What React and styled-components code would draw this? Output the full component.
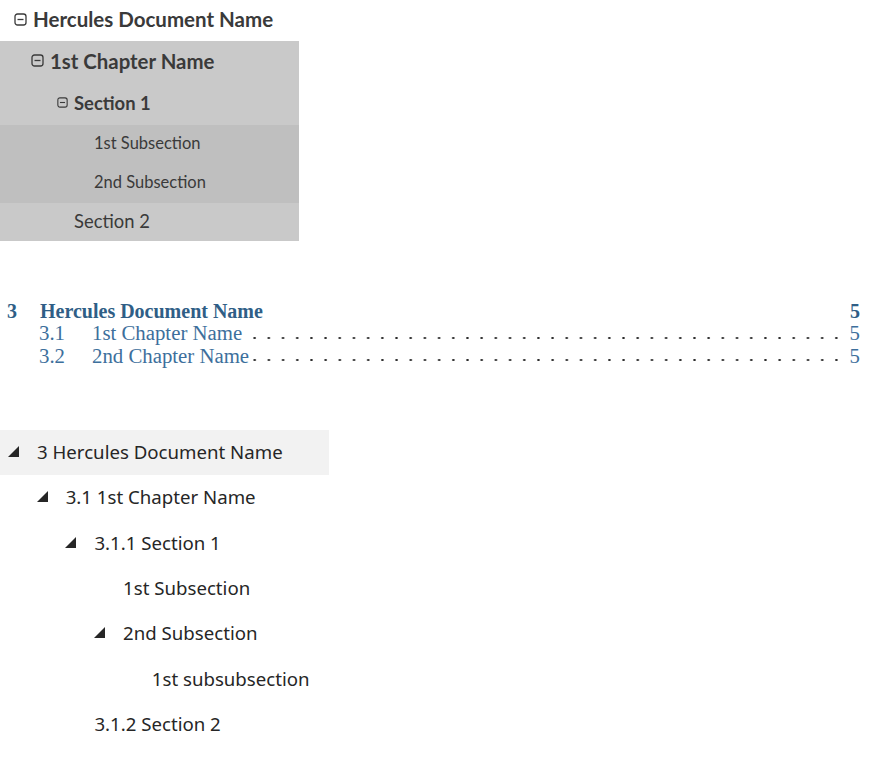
import React from "react";
import styled, { createGlobalStyle } from "styled-components";

const Global = createGlobalStyle`
  html, body { margin: 0; padding: 0; background: #ffffff; }
  body { font-family: "Lato", "Noto Sans", sans-serif; }
`;

const Page = styled.div`
  display: flex;
  flex-direction: column;
  width: 879px;
`;

/* ---------- Tree 1 (Lato, grey blocks) ---------- */
const NavTree = styled.ul`
  list-style: none;
  margin: 0;
  padding: 0;
  width: 299px;
  font-family: "Lato", sans-serif;
  color: #3a3a3a;
`;

const NavRow = styled.li`
  display: flex;
  align-items: center;
  gap: 6px;
  height: ${(p) => p.$h}px;
  padding-left: ${(p) => p.$indent}px;
  padding-bottom: 3px;
  background: ${(p) => p.$bg};
  font-size: ${(p) => p.$size}px;
  font-weight: ${(p) => (p.$bold ? 700 : 400)};
  box-sizing: border-box;
`;

const Collapse = styled.svg`
  flex: none;
  width: ${(p) => p.$s}px;
  height: ${(p) => p.$s}px;
`;

const CollapseIcon = ({ s = 13 }) => (
  <Collapse $s={s} viewBox="0 0 13 13">
    <rect x="1" y="1" width="11" height="11" rx="2.5" fill="none" stroke="#3a3a3a" strokeWidth="1.3" />
    <line x1="3.5" y1="6.5" x2="9.5" y2="6.5" stroke="#3a3a3a" strokeWidth="1.3" />
  </Collapse>
);

/* ---------- TOC (serif) ---------- */
const Toc = styled.div`
  display: flex;
  flex-direction: column;
  margin-top: 59px;
  padding: 0 19px 0 7px;
  font-family: "Liberation Serif", serif;
`;

const TocLine = styled.div`
  display: flex;
  align-items: baseline;
  height: ${(p) => (p.$main ? 22 : 22.5)}px;
  line-height: ${(p) => (p.$main ? 22 : 22.5)}px;
  font-size: ${(p) => (p.$main ? 20 : 20.8)}px;
  font-weight: ${(p) => (p.$main ? 700 : 400)};
  color: ${(p) => (p.$main ? "#2f5e86" : "#3d6f9c")};
  padding-left: ${(p) => (p.$main ? 0 : 32)}px;
`;

const TocNum = styled.span`
  flex: none;
  width: ${(p) => p.$w}px;
`;

const TocTitle = styled.span`
  flex: none;
`;

const Leader = styled.span`
  flex: 1;
  align-self: stretch;
  margin: 0 5px 0 4px;
  background-image: radial-gradient(circle at center, #2a2a2a 0.95px, transparent 1.3px);
  background-size: 14.2px 4px;
  background-repeat: repeat-x;
  background-position: right 1px bottom 5px;
`;

const Spacer = styled.span`
  flex: 1;
`;

const TocPage = styled.span`
  flex: none;
`;

/* ---------- Tree 3 (Segoe-like, triangles) ---------- */
const OutTree = styled.ul`
  list-style: none;
  margin: 63px 0 0 0;
  padding: 0;
  width: 329px;
  font-family: "Noto Sans", "Open Sans", sans-serif;
  color: #262626;
`;

const OutRow = styled.li`
  display: flex;
  align-items: center;
  height: 45.3px;
  padding-left: ${(p) => 8 + p.$level * 28.7}px;
  padding-bottom: 2px;
  background: ${(p) => (p.$active ? "#f2f2f2" : "transparent")};
  font-size: 18.65px;
  box-sizing: border-box;
`;

const Caret = styled.span`
  flex: none;
  width: 29px;
  display: flex;
  align-items: center;
`;

const CaretIcon = () => (
  <svg width="11" height="11" viewBox="0 0 11 11">
    <path d="M11 0 L11 11 L0 11 Z" fill="#262626" />
  </svg>
);

const OutLabel = styled.span`
  white-space: nowrap;
`;

const navItems = [
  { label: "Hercules Document Name", indent: 14, bg: "#ffffff", size: 20.5, bold: true, h: 41, icon: 13 },
  { label: "1st Chapter Name", indent: 31, bg: "#c9c9c9", size: 20.4, bold: true, h: 42, icon: 13 },
  { label: "Section 1", indent: 57, bg: "#c9c9c9", size: 18.4, bold: true, h: 42, icon: 11 },
  { label: "1st Subsection", indent: 94, bg: "#bfbfbf", size: 16.5, h: 39 },
  { label: "2nd Subsection", indent: 94, bg: "#bfbfbf", size: 16.5, h: 39 },
  { label: "Section 2", indent: 74, bg: "#c9c9c9", size: 18.4, h: 38 },
];

const tocItems = [
  { num: "3.1", title: "1st Chapter Name", page: "5" },
  { num: "3.2", title: "2nd Chapter Name", page: "5" },
];

const outItems = [
  { label: "3 Hercules Document Name", level: 0, caret: true, active: true },
  { label: "3.1 1st Chapter Name", level: 1, caret: true },
  { label: "3.1.1 Section 1", level: 2, caret: true },
  { label: "1st Subsection", level: 3 },
  { label: "2nd Subsection", level: 3, caret: true },
  { label: "1st subsubsection", level: 4 },
  { label: "3.1.2 Section 2", level: 2 },
];

export default function App() {
  return (
    <Page>
      <Global />
      <NavTree>
        {navItems.map((it) => (
          <NavRow key={it.label} $indent={it.indent} $bg={it.bg} $size={it.size} $bold={it.bold} $h={it.h}>
            {it.icon && <CollapseIcon s={it.icon} />}
            <span>{it.label}</span>
          </NavRow>
        ))}
      </NavTree>

      <Toc>
        <TocLine $main>
          <TocNum $w={33}>3</TocNum>
          <TocTitle>Hercules Document Name</TocTitle>
          <Spacer />
          <TocPage>5</TocPage>
        </TocLine>
        {tocItems.map((t) => (
          <TocLine key={t.num}>
            <TocNum $w={53}>{t.num}</TocNum>
            <TocTitle>{t.title}</TocTitle>
            <Leader />
            <TocPage>{t.page}</TocPage>
          </TocLine>
        ))}
      </Toc>

      <OutTree>
        {outItems.map((o) => (
          <OutRow key={o.label} $level={o.level} $active={o.active}>
            <Caret>{o.caret && <CaretIcon />}</Caret>
            <OutLabel>{o.label}</OutLabel>
          </OutRow>
        ))}
      </OutTree>
    </Page>
  );
}
